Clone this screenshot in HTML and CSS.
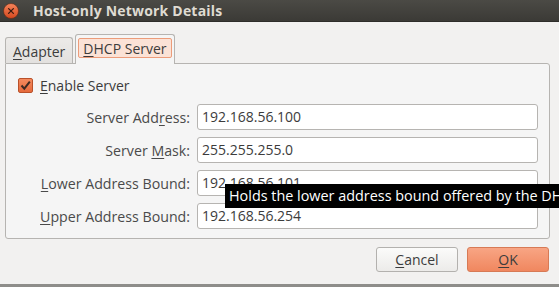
FILE: index.html
```html
<!DOCTYPE html>
<html lang="en">
<head>
    <meta charset="UTF-8">
    <title>Host-only Network Details</title>
    <link rel="stylesheet" href="styles.css">
</head>
<body>

<div class="window">
    <div class="titlebar">
        <span class="close">
            <svg width="16" height="16" viewBox="0 0 16 16">
                <defs>
                    <linearGradient id="cg" x1="0" y1="0" x2="0" y2="1">
                        <stop offset="0" stop-color="#f5845a"/>
                        <stop offset="1" stop-color="#d3481f"/>
                    </linearGradient>
                </defs>
                <circle cx="8" cy="8" r="7.5" fill="url(#cg)" stroke="#5a2a18" stroke-width="0.6"/>
                <path d="M5.6 5.6 L10.4 10.4 M10.4 5.6 L5.6 10.4" stroke="#3a1a10" stroke-width="1.3" stroke-linecap="round"/>
            </svg>
        </span>
        <span class="title">Host-only Network Details</span>
    </div>

    <div class="content">
        <div class="tabs">
            <div class="tab"><u>A</u>dapter</div>
            <div class="tab active"><span class="focus"><u>D</u>HCP Server</span></div>
        </div>

        <div class="panel">
            <label class="check">
                <span class="box">
                    <svg width="15" height="15" viewBox="0 0 15 15">
                        <path d="M3.5 7.5 L6.3 10.6 L11.8 3.6" fill="none" stroke="#3d2a22" stroke-width="2"/>
                    </svg>
                </span>
                <span><u>E</u>nable Server</span>
            </label>

            <div class="form">
                <span class="label">Server Add<u>r</u>ess:</span>
                <div class="field">192.168.56.100</div>
                <span class="label">Server <u>M</u>ask:</span>
                <div class="field">255.255.255.0</div>
                <span class="label"><u>L</u>ower Address Bound:</span>
                <div class="field">192.168.56.101</div>
                <span class="label"><u>U</u>pper Address Bound:</span>
                <div class="field">192.168.56.254</div>
            </div>
        </div>

        <div class="actions">
            <button class="btn"><u>C</u>ancel</button>
            <button class="btn ok"><u>O</u>K</button>
        </div>
    </div>

    <div class="tooltip">Holds the lower address bound offered by the DHCP server</div>
    <div class="taskbar"></div>
</div>

</body>
</html>
```

FILE: styles.css
```css
:root {
    --bg: #f2f1f0;
    --panel: #f5f5f5;
    --border: #b6b4b1;
    --text: #3c3c3c;
    --accent: #f07746;
}
body {
    margin: 0;
    font-family: 'Open Sans', 'DejaVu Sans', sans-serif;
    font-size: 14px;
    color: var(--text);
    background: var(--bg);
}
.window {
    position: relative;
    width: 559px;
    height: 287px;
    overflow: hidden;
    display: flex;
    flex-direction: column;
}
u {
    text-decoration: underline;
    text-underline-offset: 2px;
}
.titlebar {
    height: 22px;
    flex: none;
    display: flex;
    align-items: center;
    background: linear-gradient(#4b4a45, #3b3a36);
    border-bottom: 1px solid #2e2d2a;
    box-sizing: border-box;
}
.close {
    display: flex;
    margin-left: 3px;
    margin-top: 1px;
}
.title {
    margin-left: 14px;
    color: #dfdbd2;
    font-weight: bold;
    font-size: 14px;
    letter-spacing: 0.2px;
}
.content {
    flex: 1;
    display: flex;
    flex-direction: column;
    padding: 12px 9px 0 5px;
}
.tabs {
    display: flex;
    align-items: flex-end;
    gap: 2px;
    height: 29px;
    flex: none;
}
.tab {
    height: 26px;
    box-sizing: border-box;
    padding: 2px 7px 0 7px;
    border: 1px solid var(--border);
    border-bottom: none;
    border-radius: 3px 3px 0 0;
    background: linear-gradient(#eceae8, #e3e1df);
    display: flex;
    align-items: center;
    line-height: 1;
}
.tab.active {
    height: 30px;
    margin-bottom: -1px;
    padding: 0 2px;
    background: var(--panel);
    position: relative;
    z-index: 1;
}
.focus {
    display: block;
    padding: 2px 4px 0 4px;
    height: 20px;
    box-sizing: border-box;
    line-height: 16px;
    border: 1px solid #ec9c7a;
    border-radius: 2px;
    background: #fbe2d6;
    margin-top: -3px;
}
.panel {
    height: 176px;
    flex: none;
    box-sizing: border-box;
    border: 1px solid var(--border);
    border-radius: 0 3px 3px 3px;
    background: var(--panel);
    padding: 13px 11px 0 12px;
}
.check {
    display: flex;
    align-items: center;
    gap: 7px;
    height: 16px;
}
.box {
    width: 15px;
    height: 15px;
    box-sizing: border-box;
    border: 1px solid #b9512a;
    border-radius: 2px;
    background: linear-gradient(#f48a5e, #e56a3c);
    display: flex;
}
.box svg {
    margin: -1px;
}
.form {
    display: grid;
    grid-template-columns: 1fr 341px;
    column-gap: 7px;
    row-gap: 7px;
    margin-top: 11px;
    align-items: center;
}
.label {
    text-align: right;
    color: #4a4a4a;
    font-size: 14.2px;
}
.field {
    height: 26px;
    box-sizing: border-box;
    border: 1px solid var(--border);
    border-radius: 3px;
    background: #fff;
    padding: 0 4px;
    line-height: 24px;
    color: var(--text);
}
.actions {
    display: flex;
    justify-content: flex-end;
    gap: 9px;
    padding-top: 8px;
    margin-right: 1px;
}
.btn {
    width: 82px;
    height: 25px;
    font: inherit;
    color: var(--text);
    border: 1px solid #b3b1ae;
    border-radius: 3px;
    background: linear-gradient(#fbfbfa, #ecebe9);
    padding: 0;
    line-height: 1;
}
.btn.ok {
    border-color: #d77a55;
    background: linear-gradient(#f8a584, #f0875f);
}
.tooltip {
    position: absolute;
    left: 225px;
    top: 184px;
    height: 24px;
    padding: 0 4px;
    background: #000;
    color: #fff;
    line-height: 24px;
    font-size: 14.4px;
    white-space: nowrap;
}
.taskbar {
    position: absolute;
    left: 0;
    right: 0;
    bottom: 0;
    height: 3px;
    background: #8e8d8a;
}
```
